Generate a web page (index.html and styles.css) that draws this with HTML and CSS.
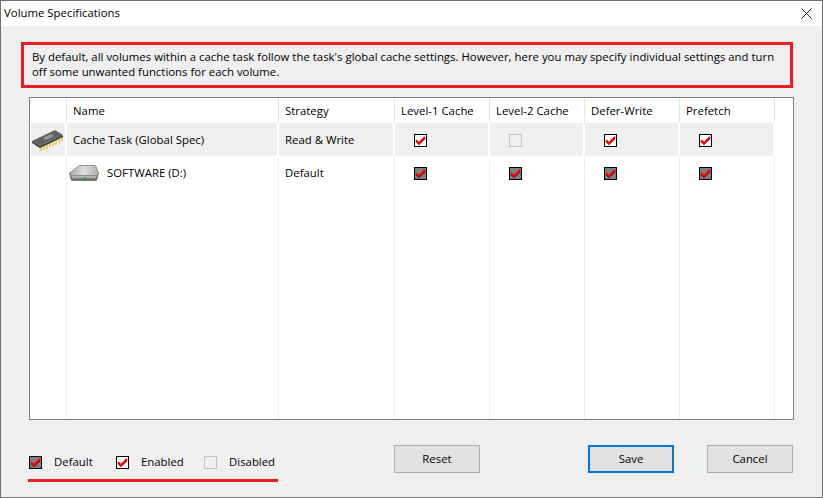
FILE: index.html
```html
<!DOCTYPE html>
<html lang="en">
<head>
<meta charset="UTF-8" />
<title>Volume Specifications</title>
<link rel="stylesheet" href="styles.css">
</head>
<body>

<svg class="defs" width="0" height="0">
  <defs>
    <linearGradient id="diskTop" x1="0" y1="0" x2="1" y2="0">
      <stop offset="0" stop-color="#a8a8a8" />
      <stop offset="0.5" stop-color="#dedede" />
      <stop offset="1" stop-color="#b0b0b0" />
    </linearGradient>
    <linearGradient id="diskFront" x1="0" y1="0" x2="0" y2="1">
      <stop offset="0" stop-color="#b4b4b4" />
      <stop offset="1" stop-color="#666" />
    </linearGradient>
  </defs>
  <symbol id="tick" viewBox="0 0 13 13">
    <path d="M2 7.2 L5 10.2 L11 4.2" fill="none" stroke="#000" stroke-width="1.3" />
    <path d="M2 6.2 L5 9.2 L11 3" fill="none" stroke="#f00" stroke-width="2" />
  </symbol>
  <symbol id="chip" viewBox="0 0 32 22">
    <path d="M9 17v5M12 16v5M15 15v5M18 13v5M21 12v5M24 11v5M27 9v5M30 8v4M5 15v3" fill="none" stroke="#eec030" stroke-width="1.4" />
    <path d="M0 12 L8 17 L31 6 V8 L8 19 L0 14 Z" fill="#3a3a3a" />
    <path d="M0 12 L23 1 L31 6 L8 17 Z" fill="#626262" />
    <path d="M11 9 L19 5 L22 7 L14 11 Z" fill="#969696" />
  </symbol>
  <symbol id="disk" viewBox="0 0 30 16">
    <path d="M.5 8 L2 14 Q2 15.5 4 15.5 H26 Q28 15.5 28 14 L29.5 8 Z" fill="url(#diskFront)" stroke="#777" />
    <path d="M.5 8 L9 1.5 Q10 .5 12 .5 H25 Q26 .5 27 1.5 L29.5 8 Q29 10.5 27 10.5 H3 Q1 10.5 .5 8 Z" fill="url(#diskTop)" stroke="#8c8c8c" />
    <path d="M3 12 H27" stroke="#d6d6d6" fill="none" />
    <rect x="15" y="12" width="2" height="3" fill="#2f9a3c" />
  </symbol>
</svg>

<div class="window">
  <div class="titlebar">
    <span>Volume Specifications</span>
    <svg class="close" width="11" height="11" viewBox="0 0 11 11"><path d="M.5 .5 L10.5 10.5 M10.5 .5 L.5 10.5" stroke="#222" fill="none" /></svg>
  </div>

  <div class="content">
    <p class="notice">By default, all volumes within a cache task follow the task's global cache settings. However, here you may specify individual settings and turn off some unwanted functions for each volume.</p>

    <div class="listview">
      <table>
        <thead>
          <tr>
            <th></th>
            <th>Name</th>
            <th>Strategy</th>
            <th>Level-1 Cache</th>
            <th>Level-2 Cache</th>
            <th>Defer-Write</th>
            <th>Prefetch</th>
            <th class="rest"></th>
          </tr>
        </thead>
        <tbody>
          <tr class="selected">
            <td class="icon"><svg width="32" height="22"><use href="#chip" /></svg></td>
            <td>Cache Task (Global Spec)</td>
            <td>Read &amp; Write</td>
            <td><span class="check on"><svg width="13" height="13"><use href="#tick" /></svg></span></td>
            <td><span class="check off"></span></td>
            <td><span class="check on"><svg width="13" height="13"><use href="#tick" /></svg></span></td>
            <td><span class="check on"><svg width="13" height="13"><use href="#tick" /></svg></span></td>
            <td class="rest"></td>
          </tr>
          <tr>
            <td class="icon"></td>
            <td><span class="volume"><svg width="30" height="16"><use href="#disk" /></svg>SOFTWARE (D:)</span></td>
            <td>Default</td>
            <td><span class="check def"><svg width="13" height="13"><use href="#tick" /></svg></span></td>
            <td><span class="check def"><svg width="13" height="13"><use href="#tick" /></svg></span></td>
            <td><span class="check def"><svg width="13" height="13"><use href="#tick" /></svg></span></td>
            <td><span class="check def"><svg width="13" height="13"><use href="#tick" /></svg></span></td>
            <td class="rest"></td>
          </tr>
          <tr class="filler">
            <td></td><td></td><td></td><td></td><td></td><td></td><td></td><td class="rest"></td>
          </tr>
        </tbody>
      </table>
    </div>

    <div class="footer">
      <div class="legend">
        <span class="legend-item"><span class="check def"><svg width="13" height="13"><use href="#tick" /></svg></span>Default</span>
        <span class="legend-item"><span class="check on"><svg width="13" height="13"><use href="#tick" /></svg></span>Enabled</span>
        <span class="legend-item"><span class="check off"></span>Disabled</span>
      </div>
      <button class="btn btn-reset">Reset</button>
      <button class="btn btn-save">Save</button>
      <button class="btn btn-cancel">Cancel</button>
    </div>
  </div>
</div>

</body>
</html>
```

FILE: styles.css
```css
html, body {
  margin: 0;
  height: 100%;
}
body {
  font-family: "Open Sans", "Liberation Sans", sans-serif;
  font-size: 11.35px;
  letter-spacing: .02px;
  color: #000;
  background: #efefef;
}
.defs {
  position: absolute;
}

.window {
  height: 498px;
  box-sizing: border-box;
  border: 1px solid #6f6f6f;
  display: flex;
  flex-direction: column;
}

.titlebar {
  height: 25px;
  flex: none;
  box-sizing: border-box;
  background: white;
  display: flex;
  align-items: center;
  justify-content: space-between;
  padding: 0 10px 2px 3px;
}
.close {
  margin-top: 2px;
}

.content {
  flex: 1;
  padding: 16px 28px 0 20px;
  display: flex;
  flex-direction: column;
}

/* Caixa vermelha do aviso */
.notice {
  margin: 0 1px 9px 0;
  height: 46px;
  box-sizing: border-box;
  border: 3px solid #ed1c24;
  padding: 4px 8px;
  line-height: 15px;
}

.listview {
  margin-left: 8px;
  height: 323px;
  flex: none;
  box-sizing: border-box;
  border: 1px solid #808080;
  background: white;
  padding: 0 1px;
}
table {
  width: 100%;
  height: 100%;
  table-layout: fixed;
  border-collapse: separate;
  border-spacing: 0;
}
th, td {
  box-sizing: border-box;
  padding: 0 0 0 6px;
  font-weight: normal;
  text-align: left;
  border-right: 1px solid #e9f1fb;
  white-space: nowrap;
}
th:nth-child(1) { width: 36px; }
th:nth-child(2) { width: 212px; }
th:nth-child(3) { width: 116px; }
th:nth-child(4),
th:nth-child(5),
th:nth-child(6),
th:nth-child(7) { width: 95px; }
th {
  height: 25px;
  border-right: 1px solid #e6e6e6;
}
tbody tr {
  height: 33px;
}
tr.filler {
  height: auto;
}
tr.selected td {
  background: #efefef;
  border-right: 2px solid white;
}
tr.selected td.rest,
.rest {
  background: white !important;
  border-right: none !important;
}
td.icon {
  padding: 0 0 0 1px;
  line-height: 0;
}
.volume {
  display: flex;
  align-items: center;
  gap: 8px;
  margin-left: -4px;
}

/* Caixinhas de marcar */
.check {
  display: inline-block;
  width: 13px;
  height: 13px;
  box-sizing: border-box;
  position: relative;
  vertical-align: middle;
  margin-left: 13px;
  border: 1px solid black;
}
.check svg {
  position: absolute;
  top: -1px;
  left: -1px;
}
.check.on { background: white; }
.check.def { background: #7f7f7f; }
.check.off { border-color: #c4c4c4; }

.footer {
  flex: 1;
  position: relative;
}
.legend {
  position: absolute;
  left: 7px;
  top: 33px;
  width: 250px;
  height: 29px;
  box-sizing: border-box;
  border-bottom: 3px solid #ed1c24;
  display: grid;
  grid-template-columns: 87px 88px auto;
  align-items: start;
}
.legend-item {
  display: flex;
  align-items: flex-start;
  gap: 12px;
  height: 13px;
  line-height: 11px;
  margin-top: 3px;
}
.legend-item .check {
  margin-left: 1px;
}
.btn {
  position: absolute;
  top: 25px;
  width: 86px;
  height: 28px;
  box-sizing: border-box;
  border: 1px solid #adadad;
  background: #e1e1e1;
  font: inherit;
  letter-spacing: inherit;
  color: #000;
  padding: 0 0 2px;
}
.btn-reset { left: 373px; }
.btn-save { left: 567px; border: 2px solid #0078d7; }
.btn-cancel { left: 686px; }
```
